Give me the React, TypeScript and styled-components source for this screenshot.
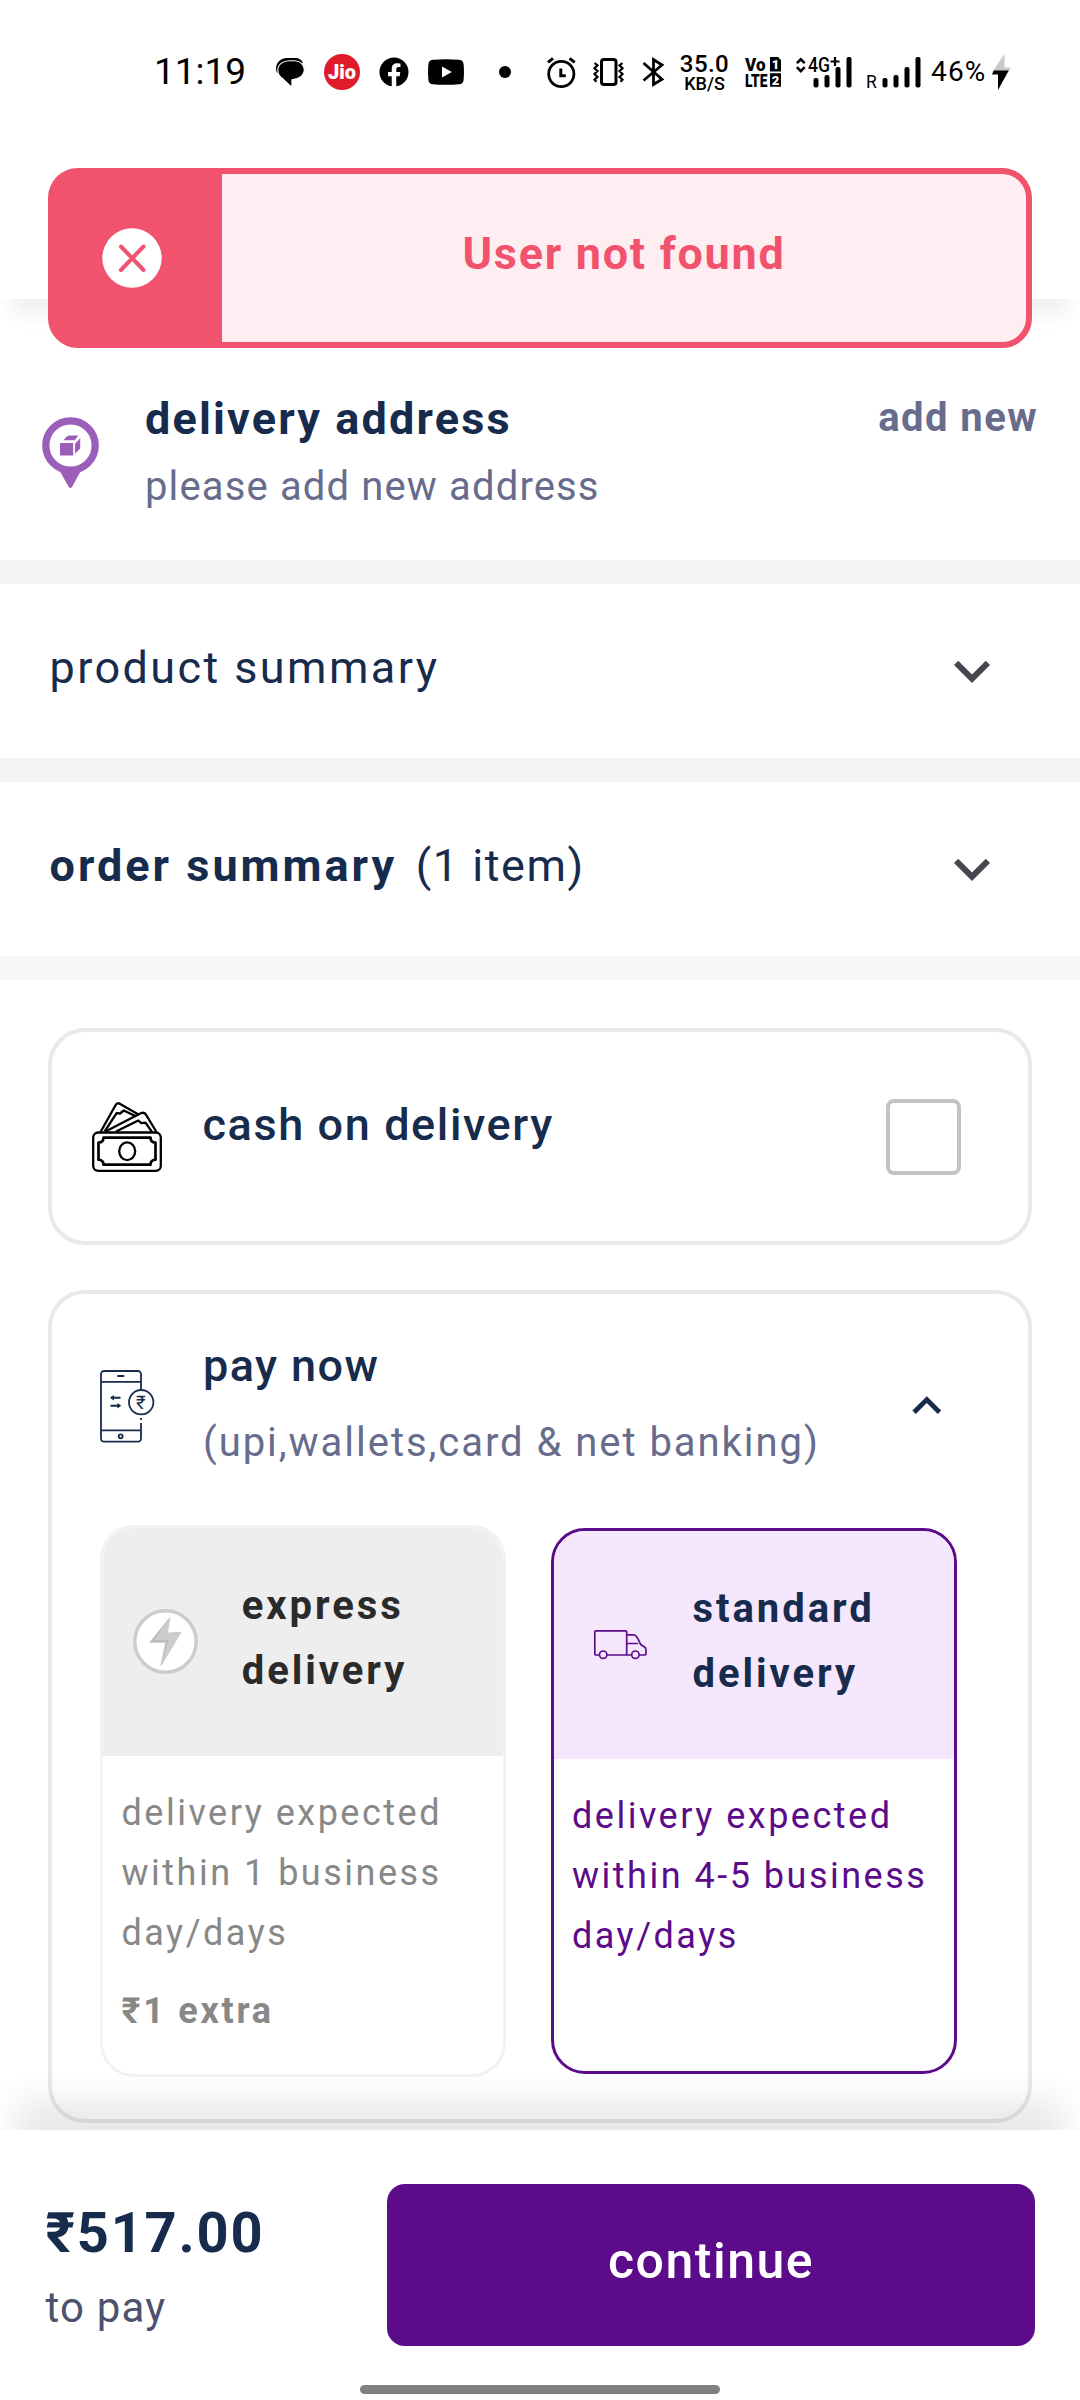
import React from 'react';
import styled, { createGlobalStyle } from 'styled-components';
import { FaFacebook } from 'react-icons/fa';

const NAVY = '#172b4d';
const SLATE = '#676c8d';
const PURPLE = '#5c0b8a';
const CORAL = '#f1536e';

const GlobalStyle = createGlobalStyle`
  *, *::before, *::after { box-sizing: border-box; }
  body {
    margin: 0;
    background: #fff;
    font-family: Roboto, 'Noto Sans', 'Liberation Sans', sans-serif;
  }
  svg { display: block; flex: none; overflow: visible; }
`;

const Screen = styled.div`
  position: relative;
  display: flex;
  flex-direction: column;
  width: 1080px;
  height: 2400px;
  overflow: hidden;
  background: #fff;
`;

interface TypeProps {
  $size: number;
  $line?: number;
  $weight?: number;
  $track?: number;
  $color?: string;
}

const Label = styled.span<TypeProps>`
  display: block;
  font-size: ${p => p.$size}px;
  line-height: ${p => p.$line ?? 60}px;
  font-weight: ${p => p.$weight ?? 400};
  letter-spacing: ${p => p.$track ?? 0}px;
  color: ${p => p.$color ?? NAVY};
`;

/* ---------- header ---------- */

const Header = styled.header`
  position: relative;
  z-index: 1;
  flex: none;
  height: 299px;
  background: #fff;
  box-shadow: 0 27px 20px -12px rgba(0, 0, 0, 0.065);
`;

const StatusBar = styled.div`
  display: flex;
  align-items: center;
  height: 144px;
  padding-left: 154px;
  color: #000;
`;

const StatusItem = styled.div<{ $w: number; $ml?: number }>`
  flex: none;
  width: ${p => p.$w}px;
  margin-left: ${p => p.$ml ?? 0}px;
  white-space: nowrap;
`;

const Dot = styled.div`
  width: 12px;
  height: 12px;
  border-radius: 50%;
  background: #000;
`;

const JioBadge = styled.div`
  display: flex;
  align-items: center;
  justify-content: center;
  width: 36px;
  height: 36px;
  border-radius: 50%;
  background: #e01a2b;
  color: #fff;
  font-size: 20px;
  font-weight: 900;
  line-height: 36px;
`;

const Speed = styled.div`
  display: flex;
  flex-direction: column;
  align-items: center;
  height: 39px;
`;

/* ---------- toast ---------- */

const Toast = styled.div`
  position: absolute;
  z-index: 3;
  top: 168px;
  left: 48px;
  display: flex;
  width: 984px;
  height: 180px;
  border: 6px solid ${CORAL};
  border-radius: 30px;
  background: linear-gradient(to right, ${CORAL} 168px, #feeef1 168px) no-repeat ${CORAL};
  overflow: hidden;
`;

const ToastIcon = styled.div`
  display: flex;
  align-items: center;
  justify-content: center;
  width: 168px;
  padding-right: 12px;
`;

const ToastMessage = styled.div`
  display: flex;
  flex: 1;
  align-items: center;
  justify-content: center;
  padding-bottom: 8px;
`;

/* ---------- content ---------- */

const Content = styled.main`
  flex: 1;
  min-height: 0;
`;

const AddressSection = styled.section`
  display: flex;
  height: 261px;
  padding: 90px 42px 0;
`;

const PinHolder = styled.div`
  width: 57px;
  margin: 28px 46px 0 0;
`;

const AddressText = styled.div`
  display: flex;
  flex: 1;
  flex-direction: column;
  gap: 8px;
`;

const LinkButton = styled.button`
  align-self: flex-start;
  margin-top: -1px;
  padding: 0;
  border: 0;
  background: none;
  font-family: inherit;
`;

const Divider = styled.div<{ $light?: boolean }>`
  height: 24px;
  background: ${p => (p.$light ? '#f6f6f6' : '#f4f4f4')};
`;

const SummaryRow = styled.section`
  display: flex;
  align-items: center;
  justify-content: space-between;
  height: 174px;
  padding: 0 72px 0 49.5px;
`;

const SummaryTitle = styled.div`
  display: flex;
  gap: 18.7px;
  padding-bottom: 6px;
`;

const PaymentList = styled.section`
  display: flex;
  flex-direction: column;
  gap: 45px;
  padding: 48px 48px 0;
`;

const Card = styled.div`
  border: 4px solid #e9e9e9;
  border-radius: 37px;
`;

const CashCard = styled(Card)`
  display: flex;
  align-items: center;
  height: 217px;
  padding: 0 67.5px 0 39.5px;
`;

const CashLabel = styled.div`
  flex: 1;
  padding: 0 0 23px 41px;
`;

const Checkbox = styled.div`
  width: 75px;
  height: 76px;
  border: 4px solid #c3c3c3;
  border-radius: 8px;
`;

const PayCard = styled(Card)`
  height: 833px;
  padding: 42px 67px 0 48px;
`;

const PayHeader = styled.div`
  display: flex;
`;

const PhoneHolder = styled.div`
  width: 54px;
  padding-top: 34px;
`;

const PayText = styled.div`
  display: flex;
  flex: 1;
  flex-direction: column;
  gap: 17px;
  padding-left: 49px;
`;

const PayChevron = styled.div`
  margin: 41px 5.7px 0 0;
`;

const Options = styled.div`
  display: flex;
  align-items: center;
  gap: 44.5px;
  margin-top: 51.5px;
`;

const Option = styled.div<{ $selected?: boolean }>`
  width: 406px;
  height: ${p => (p.$selected ? 546 : 552)}px;
  border: 3px solid ${p => (p.$selected ? PURPLE : '#f2f2f2')};
  border-radius: 34px;
  overflow: hidden;
  flex: none;
`;

const OptionHead = styled.div<{ $selected?: boolean }>`
  display: flex;
  align-items: center;
  gap: ${p => (p.$selected ? 46 : 43.7)}px;
  height: 228.5px;
  padding-left: ${p => (p.$selected ? 40 : 30)}px;
  border-radius: 31px 31px 0 0;
  background: ${p => (p.$selected ? '#f4e7fe' : '#eee')};
`;

const OptionName = styled.div`
  width: 190px;
  padding-bottom: 7px;
`;

const OptionBody = styled.div`
  display: flex;
  flex-direction: column;
  gap: 17.5px;
  padding: 27px 10px 0 18.5px;
`;

/* ---------- footer ---------- */

const Footer = styled.footer`
  position: relative;
  z-index: 2;
  flex: none;
  display: flex;
  flex-direction: column;
  align-items: center;
  height: 270px;
  background: #fff;
  box-shadow: 0 -46px 32px -16px rgba(0, 0, 0, 0.09);
`;

const FooterRow = styled.div`
  display: flex;
  width: 100%;
  height: 255px;
  padding: 54px 45px 0 45.5px;
`;

const Total = styled.div`
  display: flex;
  flex-direction: column;
  gap: 15px;
  width: 341.5px;
  padding-top: 13.8px;
`;

const ContinueButton = styled.button`
  flex: 1;
  height: 162px;
  padding: 0 0 9px;
  border: 0;
  border-radius: 18px;
  background: ${PURPLE};
  font-family: inherit;
`;

const HomeBar = styled.div`
  width: 360px;
  height: 9px;
  border-radius: 5px;
  background: #818181;
`;

/* ---------- icons ---------- */

const MessageIcon = () => (
  <svg width="28" height="28" viewBox="0 0 28 28">
    <path d="M0 11.500C0 4 5 0 11 0h8c4 0 7 2 8 5L12 9 1 15Z" fill="#000" />
    <path
      d="M13 2.800h5.500C24 2.800 28.300 6.500 28.300 11.700c0 4-3.200 7.300-7 8.800L15.300 22v6.500L8 21C4 19.500 1.800 16 1.800 12.200 1.800 6.500 7 2.800 13 2.800Z"
      fill="#000" stroke="#fff" strokeWidth="1.100"
    />
    <path d="M7 20.300 15.300 28V18Z" fill="#000" />
  </svg>
);

const YouTubeIcon = () => (
  <svg width="36" height="26" viewBox="0 0 36 26">
    <path d="M5 .7C13 0 23 0 31 .7c3 .3 4.300 1.600 4.600 4.600.5 5 .5 10.400 0 15.400-.3 3-1.600 4.300-4.600 4.600-8 .7-18 .7-26 0-3-.3-4.300-1.600-4.600-4.600C-.1 15.700-.1 10.300.4 5.300.7 2.300 2 1 5 .7Z" fill="#000" />
    <path d="M14 7.500 23.800 13 14 18.500Z" fill="#fff" />
  </svg>
);

const AlarmIcon = () => (
  <svg width="29" height="31" viewBox="0 0 29 31" fill="none" stroke="#000">
    <circle cx="14.300" cy="17" r="12.600" strokeWidth="2.800" />
    <path d="M13.800 11.500v7.200h5" strokeWidth="3" />
    <path d="m1 5.300 5-4M27.600 5.300l-5-4" strokeWidth="3" />
  </svg>
);

const VibrateIcon = () => (
  <svg width="31" height="28" viewBox="0 0 31 28" fill="none" stroke="#000">
    <rect x="8.500" y="1.500" width="14.500" height="25" rx="2.500" strokeWidth="3" />
    <path d="m1.500 5 3 2.300-3 2.900 3 2.900-3 2.900 3 2.900-3 2.900 2 2M29.500 5l-3 2.300 3 2.900-3 2.900 3 2.900-3 2.900 3 2.900-2 2" strokeWidth="2.200" />
  </svg>
);

const BluetoothIcon = () => (
  <svg width="22" height="30" viewBox="0 0 22 30" fill="none" stroke="#000" strokeWidth="2.800">
    <path d="m1.500 6 18.500 16.200-8.500 5.300V2.500L20 8 1.500 23.500" />
  </svg>
);

const VolteIcon = () => (
  <svg width="36" height="30" viewBox="0 0 36 30" fontWeight="900" fontFamily="Roboto, sans-serif">
    <text x="0" y="14" fontSize="19" textLength="20.500" lengthAdjust="spacingAndGlyphs">Vo</text>
    <text x="0" y="29.500" fontSize="18.500" textLength="22.500" lengthAdjust="spacingAndGlyphs">LTE</text>
    <path d="M25 0h8l3 3v11.500H25ZM25 16.200h11v13.500H25Z" />
    <text x="30.500" y="12" fontSize="13" textAnchor="middle" fill="#fff">1</text>
    <text x="30.500" y="27.700" fontSize="13" textAnchor="middle" fill="#fff">2</text>
  </svg>
);

const SignalBars = ({ x }: { x: number }) => (
  <g fill="#000">
    <rect x={x} y="21" width="5" height="9.500" rx="2" />
    <rect x={x + 11} y="18" width="5" height="12.500" rx="2" />
    <rect x={x + 22} y="10" width="5" height="20.500" rx="2" />
    <rect x={x + 33} y="0" width="5" height="30.500" rx="2" />
  </g>
);

const DataSignal = () => (
  <svg width="56" height="31" viewBox="0 0 56 31" fontFamily="Roboto, sans-serif">
    <path d="m.9 6.200 3.900-3.900 3.900 3.900M.9 10.200l3.900 3.900 3.900-3.900" fill="none" stroke="#000" strokeWidth="2.600" />
    <text x="12" y="15.300" fontSize="20" fontWeight="500" textLength="22" lengthAdjust="spacingAndGlyphs">4G</text>
    <path d="M34.500 4.500h9M39 0v9" stroke="#000" strokeWidth="2.200" />
    <SignalBars x={17.500} />
  </svg>
);

const RoamingSignal = () => (
  <svg width="55" height="31" viewBox="0 0 55 31" fontFamily="Roboto, sans-serif">
    <text x="-1" y="31" fontSize="17.500">R</text>
    <SignalBars x={15.500} />
  </svg>
);

const ChargeIcon = () => (
  <svg width="19" height="36" viewBox="0 0 19 36">
    <path d="M12.500 0v13.500H19L15.500 18.500H0Z" fill="#c9c9c9" />
    <path d="M1.800 16.500H16.800L6 36V20.500H0Z" fill="#000" />
  </svg>
);

const ErrorIcon = () => (
  <svg width="60" height="60" viewBox="0 0 60 60">
    <circle cx="30" cy="30" r="29.700" fill="#fff" />
    <path d="M19 18.500 41.500 42M41.500 18.500 19 42" stroke={CORAL} strokeWidth="4" strokeLinecap="round" />
  </svg>
);

const PinIcon = () => (
  <svg width="57" height="71" viewBox="0 0 57 71">
    <circle cx="28.500" cy="28.500" r="24.700" fill="none" stroke="#9b5fba" strokeWidth="7.300" />
    <path d="M18 54.500h20.500L30 70q-1.600 2-3.200 0Z" fill="#9b5fba" />
    <path d="M18 26h13.200v12.600H18ZM21.500 23.300c2.500-3 4-4.800 6-4.800h8.800l-3.500 4.800ZM33 26.800l5.200-5.500v10.200L33 36.800Z" fill="#9b5fba" />
  </svg>
);

const ChevronDown = () => (
  <svg width="72" height="72" viewBox="0 0 24 24" fill="#49454f">
    <path d="M16.590 8.590 12 13.170 7.410 8.590 6 10l6 6 6-6z" />
  </svg>
);

const ChevronUp = () => (
  <svg width="57.600" height="57.600" viewBox="0 0 24 24" fill={NAVY}>
    <path d="m12 8-6 6 1.410 1.410L12 10.830l4.590 4.580L18 14z" />
  </svg>
);

const CashIcon = () => (
  <svg width="70" height="70" viewBox="0 0 70 70" fill="none" stroke="#000" strokeWidth="2.300" strokeLinejoin="round">
    <path d="M8.800 29.500 23.500 3.200q1.700-3 4.700-1.300L46.500 12.500" />
    <path d="m12.600 29.500 12-18.300 3.400.3 3.800-3 11.500 5.500" />
    <path d="M13.500 29.500 48.800 11.300q3.700-1.600 5.600 2L64.500 30" />
    <path d="m24 29.500 22.300-11 3 2.700 4.200-.5 6.500 9.300" />
    <rect x="1.200" y="30.500" width="67.600" height="38.300" rx="5" />
    <path d="M11.500 35.700h47q0 4.500 5 5v17q-5 .5-5 5h-47q0-4.500-5-5v-17q5-.5 5-5Z" strokeWidth="2.700" />
    <ellipse cx="35.200" cy="49.300" rx="8" ry="8.900" />
  </svg>
);

const PhonePayIcon = () => (
  <svg width="54" height="73" viewBox="0 0 54 73" fill="none" stroke={NAVY} strokeWidth="1.800">
    <path d="M41 19.500V4.500Q41 1 37.500 1h-33Q1 1 1 4.500v63.700q0 3.500 3.500 3.500h33q3.500 0 3.500-3.500V53M41 48v2" />
    <path d="M1 11.900h40M1 60.400h40M17.300 6h7" />
    <circle cx="20.700" cy="66.300" r="2" />
    <circle cx="41.200" cy="32.200" r="12.200" />
    <path d="M11 27.700h9.500M20 35.700h-9.500" strokeWidth="1.900" />
    <path d="m10 27.700 4-2.800v5.600ZM21.300 35.700l-4-2.800v5.600Z" fill={NAVY} stroke="none" />
    <text x="40.700" y="38.800" fontSize="18.500" fontFamily="Roboto, sans-serif" textAnchor="middle" fill={NAVY} stroke="none">₹</text>
  </svg>
);

const BoltIcon = () => (
  <svg width="65" height="65" viewBox="0 0 65 65">
    <circle cx="32.500" cy="32.500" r="30.700" fill="#fff" stroke="#ccc" strokeWidth="3.500" />
    <path d="M37 8.500 17 33.200l15.700.3L28 56.500l20-33.200-13.700.8Z" fill="#ccc" stroke="#ccc" strokeLinejoin="round" />
    <path d="M37 8.500 17 33.200l16.500-.7L28 56.500l7.500-25.200H21Z" fill="#b9b9b9" />
  </svg>
);

const TruckIcon = () => (
  <svg width="53" height="29" viewBox="0 0 53 29" fill="none" stroke={PURPLE} strokeWidth="1.700">
    <path d="M5.300 25H2q-1.200 0-1.200-1.200V2Q.8.800 2 .8h29.700q1 0 1 1.200v23M13 25h24.700M45.200 25h5q1.800 0 1.800-1.800v-3.500q0-2-1.800-3l-3.500-2.100q-4-9.800-6.700-9.800h-7.300M32.700 13.500h11.500" />
    <circle cx="9.200" cy="24.700" r="3.700" />
    <circle cx="41.400" cy="24.700" r="3.700" />
  </svg>
);

/* ---------- screen ---------- */

interface DeliveryOptionProps {
  name: string;
  icon: React.ReactNode;
  details: string;
  extra?: string;
  selected?: boolean;
}

const DeliveryOption = ({ name, icon, details, extra, selected }: DeliveryOptionProps) => (
  <Option $selected={selected}>
    <OptionHead $selected={selected}>
      {icon}
      <OptionName>
        <Label $size={40} $line={65.5} $weight={750} $track={2.950} $color={selected ? NAVY : '#2a2a2a'}>{name}</Label>
      </OptionName>
    </OptionHead>
    <OptionBody>
      <Label $size={36} $track={2.500} $color={selected ? PURPLE : '#888'}>{details}</Label>
      {extra && <Label $size={36} $weight={750} $track={2.750} $color="#888">{extra}</Label>}
    </OptionBody>
  </Option>
);

export default function App() {
  return (
    <Screen>
      <GlobalStyle />
      <Header>
        <StatusBar>
          <StatusItem $w={92}><Label $size={37} $color="#000">11:19</Label></StatusItem>
          <StatusItem $w={28} $ml={30}><MessageIcon /></StatusItem>
          <StatusItem $w={36} $ml={20}><JioBadge>Jio</JioBadge></StatusItem>
          <StatusItem $w={30} $ml={19}><FaFacebook size={30} /></StatusItem>
          <StatusItem $w={36} $ml={19}><YouTubeIcon /></StatusItem>
          <StatusItem $w={12} $ml={35}><Dot /></StatusItem>
          <StatusItem $w={29} $ml={35.5}><AlarmIcon /></StatusItem>
          <StatusItem $w={31} $ml={17.5}><VibrateIcon /></StatusItem>
          <StatusItem $w={22} $ml={18}><BluetoothIcon /></StatusItem>
          <StatusItem $w={49} $ml={16}>
            <Speed>
              <Label $size={24} $line={22} $weight={500} $track={0.450} $color="#000">35.0</Label>
              <Label $size={18} $line={17} $weight={500} $color="#000">KB/S</Label>
            </Speed>
          </StatusItem>
          <StatusItem $w={36} $ml={16}><VolteIcon /></StatusItem>
          <StatusItem $w={56} $ml={15}><DataSignal /></StatusItem>
          <StatusItem $w={55} $ml={15}><RoamingSignal /></StatusItem>
          <StatusItem $w={56} $ml={9}><Label $size={28} $weight={450} $track={1.200} $color="#000">46%</Label></StatusItem>
          <StatusItem $w={19} $ml={5}><ChargeIcon /></StatusItem>
        </StatusBar>
      </Header>

      <Toast role="alert">
        <ToastIcon><ErrorIcon /></ToastIcon>
        <ToastMessage><Label $size={45} $weight={700} $track={1.710} $color={CORAL}>User not found</Label></ToastMessage>
      </Toast>

      <Content>
        <AddressSection>
          <PinHolder><PinIcon /></PinHolder>
          <AddressText>
            <Label $size={45} $weight={750} $track={2.150}>delivery address</Label>
            <Label $size={40} $track={1.140} $color={SLATE}>please add new address</Label>
          </AddressText>
          <LinkButton><Label $size={40} $weight={700} $track={1.430} $color={SLATE}>add new</Label></LinkButton>
        </AddressSection>
        <Divider />
        <SummaryRow>
          <SummaryTitle><Label $size={45} $track={2.420}>product summary</Label></SummaryTitle>
          <ChevronDown />
        </SummaryRow>
        <Divider />
        <SummaryRow>
          <SummaryTitle>
            <Label $size={45} $weight={750} $track={3}>order summary</Label>
            <Label $size={45} $track={1.540}>(1 item)</Label>
          </SummaryTitle>
          <ChevronDown />
        </SummaryRow>
        <Divider $light />

        <PaymentList>
          <CashCard>
            <CashIcon />
            <CashLabel><Label $size={45} $weight={550} $track={1.600}>cash on delivery</Label></CashLabel>
            <Checkbox role="checkbox" aria-checked={false} />
          </CashCard>
          <PayCard>
            <PayHeader>
              <PhoneHolder><PhonePayIcon /></PhoneHolder>
              <PayText>
                <Label $size={45} $weight={550} $track={1.400}>pay now</Label>
                <Label $size={40} $track={1.960} $color={SLATE}>(upi,wallets,card &amp; net banking)</Label>
              </PayText>
              <PayChevron><ChevronUp /></PayChevron>
            </PayHeader>
            <Options>
              <DeliveryOption
                name="express delivery"
                icon={<BoltIcon />}
                details="delivery expected within 1 business day/days"
                extra="₹1 extra"
              />
              <DeliveryOption
                name="standard delivery"
                icon={<TruckIcon />}
                details="delivery expected within 4-5 business day/days"
                selected
              />
            </Options>
          </PayCard>
        </PaymentList>
      </Content>

      <Footer>
        <FooterRow>
          <Total>
            <Label $size={56} $line={70} $weight={750} $track={1.800}>₹517.00</Label>
            <Label $size={42} $line={50} $track={1.200} $color="#4d5170">to pay</Label>
          </Total>
          <ContinueButton><Label $size={50} $weight={550} $track={1.500} $color="#fff">continue</Label></ContinueButton>
        </FooterRow>
        <HomeBar />
      </Footer>
    </Screen>
  );
}
